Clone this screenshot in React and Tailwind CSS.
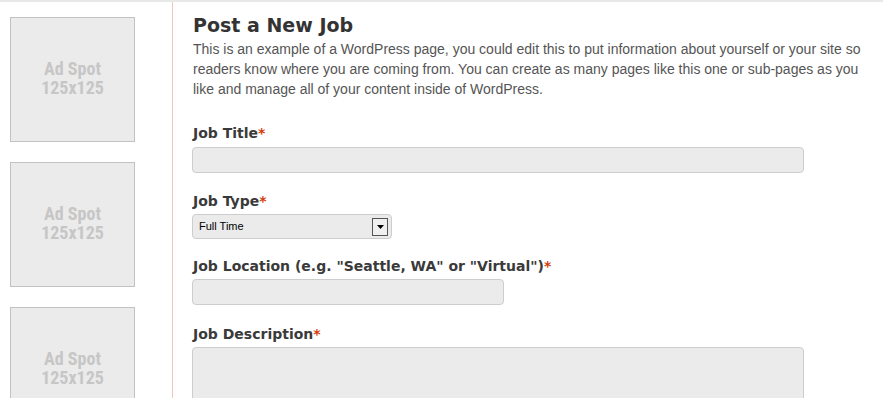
import React from "react";

const AdSpot = () => (
  <div className="w-[125px] h-[125px] shrink-0 border border-[#c2c2c2] bg-[#ebebeb] flex flex-col items-center justify-center pb-[4px] text-[#c6c6c6] font-bold text-[18px] leading-[19px] font-['Liberation_Sans_Narrow','Roboto_Condensed','Liberation_Sans',sans-serif]">
    <span>Ad Spot</span>
    <span>125x125</span>
  </div>
);

const Label = ({ children }) => (
  <label className="block text-[14px] leading-[18px] font-bold text-[#3a3a3a] font-['DejaVu_Sans',Verdana,sans-serif]">
    {children}
    <span className="text-[#d23c0a]">*</span>
  </label>
);

const App = () => {
  return (
    <div className="w-[883px] h-[398px] overflow-hidden bg-white border-t-2 border-[#e8e8e8] flex font-['Liberation_Sans',Arial,sans-serif]">
      <div className="w-[173px] shrink-0 border-r border-[#f2c4c4] pl-[10px] pt-[15px] flex flex-col gap-[20px]">
        <AdSpot />
        <AdSpot />
        <AdSpot />
      </div>

      <div className="flex-1 pl-[19px] pt-[9px]">
        <h1 className="text-[19px] leading-[28px] font-bold text-[#333] ml-[1px] font-['DejaVu_Sans',Verdana,sans-serif]">
          Post a New Job
        </h1>
        <p className="text-[14px] leading-[20px] text-[#555] ml-[1px] pr-[8px]">
          This is an example of a WordPress page, you could edit this to put information about yourself or your site so readers know where you are coming from. You can create as many pages like this one or sub-pages as you like and manage all of your content inside of WordPress.
        </p>

        <div className="mt-[25px] ml-[1px]">
          <Label>Job Title</Label>
        </div>
        <div className="mt-[5px] w-[612px] h-[26px] rounded-[4px] border border-[#cdcdcd] bg-[#ebebeb]" />

        <div className="mt-[19px] ml-[1px]">
          <Label>Job Type</Label>
        </div>
        <div className="mt-[4px] w-[200px] h-[25px] rounded-[4px] border border-[#cdcdcd] bg-[#ebebeb] flex items-center justify-between pl-[6px] pr-[3px]">
          <span className="text-[11px] text-black font-['Liberation_Sans',Arial,sans-serif]">Full Time</span>
          <div className="w-[16px] h-[18px] border border-[#555] bg-[#f0f0f0] flex items-center justify-center">
            <svg width="7" height="4" viewBox="0 0 7 4">
              <path d="M0 0h7L3.5 4z" fill="#000" />
            </svg>
          </div>
        </div>

        <div className="mt-[18px] ml-[1px]">
          <Label>Job Location (e.g. "Seattle, WA" or "Virtual")</Label>
        </div>
        <div className="mt-[4px] w-[312px] h-[26px] rounded-[4px] border border-[#cdcdcd] bg-[#ebebeb]" />

        <div className="mt-[20px] ml-[1px]">
          <Label>Job Description</Label>
        </div>
        <div className="mt-[4px] w-[612px] h-[80px] rounded-[4px] border border-[#cdcdcd] bg-[#ebebeb]" />
      </div>
    </div>
  );
};

export default App;
